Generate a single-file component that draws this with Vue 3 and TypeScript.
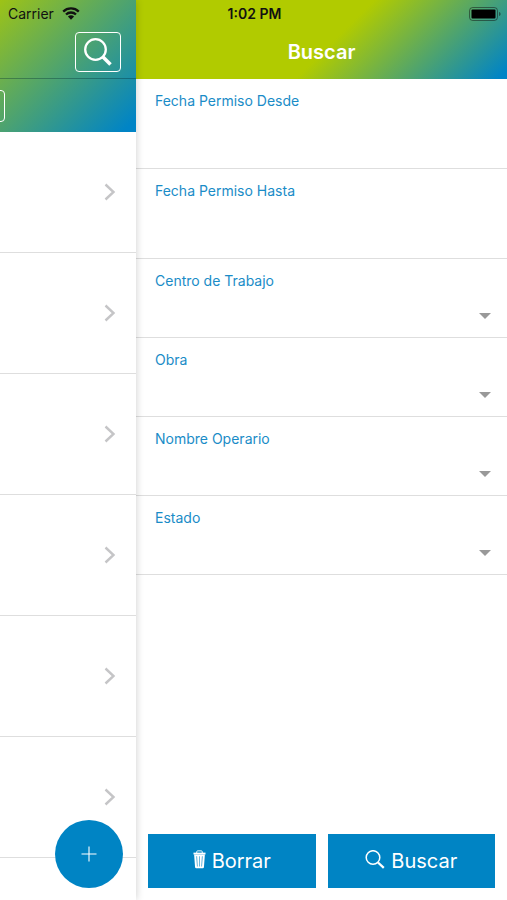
<script setup lang="ts">
import { reactive, ref } from 'vue'

interface Field {
  id: 'desde' | 'hasta' | 'centro' | 'obra' | 'operario' | 'estado'
  label: string
  kind: 'date' | 'select'
}

const fields: Field[] = [
  { id: 'desde', label: 'Fecha Permiso Desde', kind: 'date' },
  { id: 'hasta', label: 'Fecha Permiso Hasta', kind: 'date' },
  { id: 'centro', label: 'Centro de Trabajo', kind: 'select' },
  { id: 'obra', label: 'Obra', kind: 'select' },
  { id: 'operario', label: 'Nombre Operario', kind: 'select' },
  { id: 'estado', label: 'Estado', kind: 'select' },
]

const emptyFilters = () => ({ desde: '', hasta: '', centro: '', obra: '', operario: '', estado: '' })
const filters = reactive(emptyFilters())
const applied = ref(emptyFilters())
const permits = [1, 2, 3, 4, 5, 6, 7]

function clearFilters() {
  Object.assign(filters, emptyFilters())
}

function search() {
  applied.value = { ...filters }
}
</script>

<template>
  <div class="screen">
    <div class="status">
      <div class="status-left">
        <span>Carrier</span>
        <svg class="wifi" viewBox="0 0 18 13" aria-hidden="true">
          <path d="M1.2 4.600a11.200 11.200 0 0 1 15.600 0M4 7.500a7.200 7.200 0 0 1 10 0" fill="none" stroke="#111" stroke-width="2.300" />
          <path d="M5.900 9.600a4.500 4.500 0 0 1 6.200 0L9 12.700z" fill="#111" />
        </svg>
      </div>
      <span class="clock">1:02 PM</span>
      <div class="status-right">
        <svg class="battery" viewBox="0 0 32 14" aria-hidden="true">
          <rect x=".5" y=".5" width="28" height="13" rx="3.2" fill="none" stroke="#111" stroke-opacity=".5" />
          <rect x="2.5" y="2.5" width="24" height="9" rx="1" fill="#000" />
          <path d="M30 5v4c1-.3 1.600-1.100 1.600-2S31 5.300 30 5z" fill="#111" fill-opacity=".5" />
        </svg>
      </div>
    </div>

    <section class="page">
      <header class="page-header">
        <div class="navbar">
          <button class="nav-search" type="button" aria-label="Buscar">
            <svg viewBox="0 0 28 28" aria-hidden="true">
              <circle cx="11.500" cy="11.500" r="10.300" fill="none" stroke="#fff" stroke-width="2.300" />
              <path d="M18.500 18.500l8 8" stroke="#fff" stroke-width="3.600" />
            </svg>
          </button>
        </div>
        <div class="toolbar">
          <button class="segment" type="button" aria-label="Filtro"></button>
        </div>
      </header>
      <ul class="list">
        <li v-for="permit in permits" :key="permit">
          <a class="row" href="#" aria-label="Permiso">
            <svg class="chevron" viewBox="0 0 12 18" aria-hidden="true">
              <path d="M1.500 1.500L9.500 9l-8 7.500" fill="none" stroke="#c5c5c7" stroke-width="2.400" />
            </svg>
          </a>
        </li>
      </ul>
      <button class="fab" type="button" aria-label="Añadir">
        <svg viewBox="0 0 16 16" aria-hidden="true">
          <path d="M8 .5v15M.5 8h15" stroke="#fff" stroke-width="1.100" />
        </svg>
      </button>
    </section>

    <aside class="panel">
      <header class="panel-header">
        <h1>Buscar</h1>
      </header>
      <form class="form" @submit.prevent="search">
        <div v-for="field in fields" :key="field.id" class="field" :class="field.kind">
          <label :for="field.id">{{ field.label }}</label>
          <input v-if="field.kind === 'date'" :id="field.id" v-model="filters[field.id]" type="text" />
          <div v-else class="picker">
            <select :id="field.id" v-model="filters[field.id]">
              <option value=""></option>
            </select>
            <svg viewBox="0 0 12 6" aria-hidden="true"><path d="M0 0h12L6 6z" fill="#999" /></svg>
          </div>
        </div>
        <div class="actions">
          <button type="button" @click="clearFilters">
            <svg class="trash" viewBox="0 0 14 20" aria-hidden="true">
              <path d="M4 3V1.800Q4 .7 5 .7h4q1 0 1 1.100V3" fill="none" stroke="#fff" />
              <path d="M.5 2.600h13v2H.5z" fill="#fff" />
              <path fill-rule="evenodd" d="M1.200 4.500h11.600l-1 13.700q-.1 1.300-1.300 1.300h-7q-1.200 0-1.300-1.300zM3.700 6.500l.6 11h.6l-.5-11zM6.700 6.500v11h.6v-11zM9.600 6.500l-.5 11h.6l.6-11z" fill="#fff" />
            </svg>
            <span>Borrar</span>
          </button>
          <button type="submit">
            <svg class="lens" viewBox="0 0 20 20" aria-hidden="true">
              <circle cx="8" cy="7.500" r="6.800" fill="none" stroke="#fff" stroke-width="1.500" />
              <path d="M13 12.500l5.800 5.300" stroke="#fff" stroke-width="2.300" />
            </svg>
            <span>Buscar</span>
          </button>
        </div>
      </form>
    </aside>
  </div>
</template>

<style>
body {
  margin: 0;
  background: #fff;
}
</style>

<style scoped>
.screen {
  position: relative;
  display: flex;
  height: 100vh;
  overflow: hidden;
  font-family: Inter, Roboto, "Liberation Sans", sans-serif;
  background: #fff;
}
button,
input,
select {
  margin: 0;
  padding: 0;
  border: 0;
  border-radius: 0;
  background: none;
  font: inherit;
  color: inherit;
}
svg {
  display: block;
}
.status {
  position: absolute;
  z-index: 3;
  top: 0;
  left: 0;
  right: 0;
  display: grid;
  grid-template-columns: 1fr auto 1fr;
  align-items: center;
  height: 27px;
  padding: 0 6px 0 8px;
  font-size: 14px;
  color: #111;
}
.status-left {
  display: flex;
  align-items: center;
  gap: 8px;
}
.wifi {
  width: 18px;
  height: 13px;
}
.clock {
  font-weight: 600;
}
.status-right {
  display: flex;
  justify-content: flex-end;
}
.battery {
  width: 32px;
  height: 14px;
}
.page {
  position: relative;
  z-index: 2;
  flex: 0 0 136px;
  height: 100%;
  background: #fff;
  box-shadow: 0 0 8px rgba(0, 0, 0, 0.2);
}
.page-header {
  background: linear-gradient(135deg, #b1cb00 53%, #0084c6 98%) right top / 100vw 100%;
}
.navbar {
  display: flex;
  justify-content: flex-end;
  box-sizing: border-box;
  height: 79px;
  padding: 32px 15px 0 0;
  border-bottom: 1px solid rgba(0, 40, 50, 0.35);
}
.nav-search {
  display: flex;
  align-items: center;
  justify-content: center;
  box-sizing: border-box;
  width: 46px;
  height: 40px;
  border: 1px solid #fff;
  border-radius: 4px;
}
.nav-search svg {
  width: 28px;
  height: 28px;
}
.toolbar {
  display: flex;
  align-items: center;
  height: 53px;
  overflow: hidden;
}
.segment {
  box-sizing: border-box;
  width: 40px;
  height: 32px;
  margin-left: -35px;
  border: 1px solid #fff;
  border-radius: 4px;
}
.list {
  height: calc(100% - 132px);
  margin: 0;
  padding: 0;
  overflow: hidden;
  list-style: none;
}
.row {
  display: flex;
  align-items: center;
  justify-content: flex-end;
  box-sizing: border-box;
  height: 121px;
  padding-right: 20px;
  border-bottom: 1px solid #dedede;
}
.chevron {
  width: 12px;
  height: 18px;
}
.fab {
  position: absolute;
  right: 13px;
  bottom: 12px;
  display: flex;
  align-items: center;
  justify-content: center;
  width: 68px;
  height: 68px;
  border-radius: 50%;
  background: #0084c4;
}
.fab svg {
  width: 16px;
  height: 16px;
}
.panel {
  display: flex;
  flex: 1;
  flex-direction: column;
  min-width: 0;
}
.panel-header {
  display: flex;
  justify-content: center;
  box-sizing: border-box;
  height: 79px;
  padding-top: 40px;
  background: linear-gradient(135deg, #b1cb00 53%, #0084c6 98%);
}
h1 {
  margin: 0;
  font-size: 20px;
  font-weight: 600;
  line-height: 24px;
  color: #fff;
}
.form {
  display: flex;
  flex: 1;
  flex-direction: column;
}
.field {
  display: flex;
  flex-direction: column;
  box-sizing: border-box;
  padding: 12px 16px 0 19px;
  border-bottom: 1px solid #dedede;
}
.date {
  height: 90px;
}
.select {
  height: 79px;
}
.field label {
  font-size: 14px;
  line-height: 20px;
  color: #1a8cc7;
}
.field input {
  height: 44px;
  outline: none;
}
.picker {
  display: flex;
  align-items: center;
  height: 40px;
  padding-top: 5px;
}
.picker select {
  flex: 1;
  height: 36px;
  appearance: none;
  outline: none;
}
.picker svg {
  width: 12px;
  height: 6px;
}
.actions {
  display: flex;
  gap: 12px;
  margin-top: auto;
  padding: 12px;
}
.actions button {
  display: flex;
  flex: 1;
  align-items: center;
  justify-content: center;
  gap: 6px;
  height: 54px;
  background: #0084c4;
  color: #fff;
  font-size: 20px;
  line-height: 24px;
}
.trash {
  width: 13px;
  height: 19px;
  margin-bottom: 4px;
}
.lens {
  width: 20px;
  height: 20px;
  margin-bottom: 2px;
}
</style>
